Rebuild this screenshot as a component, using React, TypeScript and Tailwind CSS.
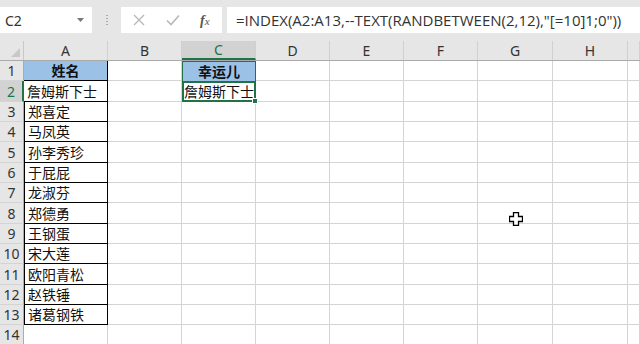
import React from "react";

const cols = [
  { name: "A", w: "w-[84px]" },
  { name: "B", w: "w-[74px]" },
  { name: "C", w: "w-[74px]" },
  { name: "D", w: "w-[74px]" },
  { name: "E", w: "w-[74px]" },
  { name: "F", w: "w-[74px]" },
  { name: "G", w: "w-[75px]" },
  { name: "H", w: "w-[75px]" },
  { name: "", w: "flex-1" },
];

const names = [
  "詹姆斯下士",
  "郑喜定",
  "马凤英",
  "孙李秀珍",
  "于屁屁",
  "龙淑芬",
  "郑德勇",
  "王钢蛋",
  "宋大莲",
  "欧阳青松",
  "赵铁锤",
  "诸葛钢铁",
];

const rowHeights = [
  "h-[20px]", "h-[21px]", "h-[20px]", "h-[20px]", "h-[21px]", "h-[20px]", "h-[20px]",
  "h-[21px]", "h-[20px]", "h-[20px]", "h-[21px]", "h-[20px]", "h-[20px]", "h-[20px]",
];

const cjk = { fontFamily: '"Noto Sans CJK SC", "Noto Sans", sans-serif' };

function Cursor() {
  return (
    <svg width="14" height="14" viewBox="0 0 14 14" className="absolute left-[509px] top-[212px]">
      <path d="M4.5 0.5h5v4h4v5h-4v4h-5v-4h-4v-5h4z" fill="white" stroke="black" strokeWidth="1.3" />
    </svg>
  );
}

function FormulaBar() {
  return (
    <div className="flex h-[41px] items-center bg-[#e6e6e6] pb-[1px]">
      <div className="flex h-[26px] w-[92px] items-center justify-between bg-white pl-[5px] pr-[8px] text-[14px] text-[#333]">
        <span>C2</span>
        <svg width="7" height="4" viewBox="0 0 7 4">
          <path d="M0 0h7L3.5 4z" fill="#777" />
        </svg>
      </div>
      <div className="flex w-[29px] flex-col items-center justify-center gap-[2px]">
        {[0, 1, 2, 3].map((i) => (
          <div key={i} className="h-[1px] w-[2px] bg-[#aaa]" />
        ))}
      </div>
      <div className="flex h-[26px] w-[101px] items-center bg-white text-[#a8a8a8]">
        <svg width="12" height="12" viewBox="0 0 12 12" className="ml-[12px]">
          <path d="M1 1l10 10M11 1L1 11" stroke="#b8b8b8" strokeWidth="1.4" />
        </svg>
        <svg width="14" height="12" viewBox="0 0 14 12" className="ml-[21px]">
          <path d="M1 6.5l4 4L13 1.5" stroke="#b8b8b8" strokeWidth="1.6" fill="none" />
        </svg>
        <span className="ml-[20px] text-[14px] italic text-[#555]" style={{ fontFamily: '"Liberation Serif", serif' }}>
          <span className="font-bold">f</span>
          <span className="text-[11px]">x</span>
        </span>
      </div>
      <div
        className="ml-[5px] flex h-[26px] flex-1 items-center whitespace-nowrap bg-white pl-[9px] text-[15px] text-[#333]"
        style={{ fontFamily: '"Open Sans", "Noto Sans", sans-serif' }}
      >
        =INDEX(A2:A13,--TEXT(RANDBETWEEN(2,12),"[=10]1;0"))
      </div>
    </div>
  );
}

function HeaderRow() {
  return (
    <div className="flex h-[20px] border-b border-[#ababab] bg-[#e6e6e6] text-[14px] text-[#333]">
      <div className="relative w-[24px] border-r border-[#c8c8c8]">
        <svg width="9" height="9" viewBox="0 0 9 9" className="absolute bottom-[3px] right-[3px]">
          <path d="M9 0v9H0z" fill="#c8c8c8" />
        </svg>
      </div>
      {cols.map((c) => (
        <div
          key={c.name + "h"}
          className={`${c.w} flex items-center justify-center border-r border-[#d0d0d0] ${
            c.name === "C" ? "border-b-2 border-b-[#217346] bg-[#d2d2d2] text-[#217346]" : ""
          }`}
        >
          {c.name}
        </div>
      ))}
    </div>
  );
}

function Row({ n }: { n: number }) {
  const sel = n === 2;
  return (
    <div className={`flex ${rowHeights[n - 1]} text-[14px]`}>
      <div
        className={`flex w-[24px] items-center justify-center border-b border-[#d4d4d4] ${
          sel ? "border-r-2 border-r-[#217346] bg-[#d2d2d2] text-[#217346]" : "border-r border-r-[#ababab] bg-[#e6e6e6] text-[#333]"
        }`}
      >
        {n}
      </div>
      {cols.map((c) => {
        if (c.name === "A") {
          if (n > 13) {
            return <div key="A" className={`${c.w} border-r border-b border-[#d4d4d4]`} />;
          }
          if (n === 1) {
            return (
              <div
                key="A"
                className={`${c.w} flex items-center justify-center border-b border-r border-black bg-[#9bc2e6] font-bold text-[#111]`}
                style={cjk}
              >
                姓名
              </div>
            );
          }
          return (
            <div
              key="A"
              className={`${c.w} flex items-center whitespace-nowrap border-b border-r border-black pl-[3px] text-[#111] ${sel ? "" : "border-l border-l-black"}`}
              style={cjk}
            >
              {names[n - 2]}
            </div>
          );
        }
        if (c.name === "C" && n === 1) {
          return (
            <div
              key="C"
              className={`${c.w} flex items-center justify-center border-x border-t border-[#217346] bg-[#9bc2e6] font-bold text-[#111]`}
              style={cjk}
            >
              幸运儿
            </div>
          );
        }
        if (c.name === "C" && n === 2) {
          return (
            <div
              key="C"
              className={`${c.w} relative flex items-center whitespace-nowrap border-2 border-[#217346] text-[#111]`}
              style={cjk}
            >
              詹姆斯下士
              <div className="absolute bottom-[-4px] right-[-4px] h-[6px] w-[6px] border border-white bg-[#217346]" />
            </div>
          );
        }
        return <div key={c.name} className={`${c.w} border-b border-r border-[#d4d4d4]`} />;
      })}
    </div>
  );
}

export default function App() {
  return (
    <div
      className="relative h-[344px] w-[640px] overflow-hidden bg-white"
      style={{ fontFamily: '"Noto Sans", "Noto Sans CJK SC", sans-serif' }}
    >
      <FormulaBar />
      <HeaderRow />
      {Array.from({ length: 14 }, (_, i) => (
        <Row key={i} n={i + 1} />
      ))}
      <Cursor />
    </div>
  );
}
